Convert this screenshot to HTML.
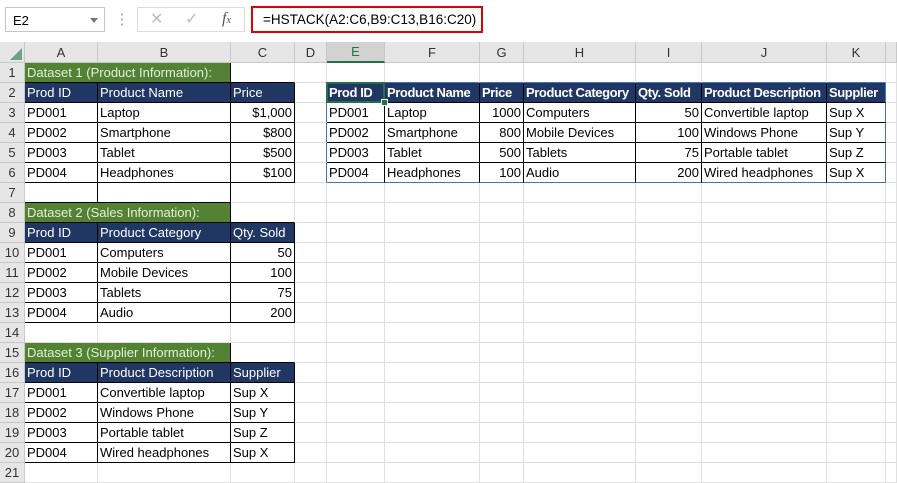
<!DOCTYPE html><html><head><style>
body{margin:0;width:897px;height:481px;overflow:hidden;background:#fff;font-family:"Liberation Sans",sans-serif;position:relative}
.top{position:absolute;left:0;top:0;width:897px;height:42px;background:#fff}
.nb{position:absolute;left:5px;top:7px;width:100px;height:25px;border:1px solid #c6c6c6;font-size:13px;line-height:25px;padding-left:7px;box-sizing:border-box}
.nb:after{content:"";position:absolute;right:6px;top:10px;border:4px solid transparent;border-top:5px solid #777}
.dots{position:absolute;left:121px;top:12px;width:2px;height:14px;background:radial-gradient(circle,#aaa 1px,transparent 1.2px) 0 0/2px 5px}
.fx{position:absolute;left:137px;top:7px;width:108px;height:25px;border:1px solid #dcdcdc;box-sizing:border-box;color:#bbb;font-size:16px}
.fb{position:absolute;left:251px;top:6px;width:232px;height:27px;border:2px solid #e00000;box-sizing:border-box;font-size:13.5px;line-height:23px;padding-left:10px}
table{position:absolute;left:0;top:42px;width:897px;border-collapse:separate;border-spacing:0;table-layout:fixed;font-size:13px}
td{height:20px;box-sizing:border-box;padding:0 2px;border-right:1px solid #e0e0e0;border-bottom:1px solid #e0e0e0;white-space:nowrap;overflow:hidden;line-height:19px}
tr.h td{background:#e6e6e6;text-align:center;border-color:#c8c8c8;color:#333}
td.rh{background:#e6e6e6;text-align:center;border-color:#c8c8c8;padding:0;color:#333}
.r{text-align:right}
.bb{border-bottom-color:#000}.br{border-right-color:#000}
.k{border-right-color:#000;border-bottom-color:#000}
.g{background:#548235;color:#e2efda}
.n{background:#203764;color:#fff}
.nb2{font-weight:bold;letter-spacing:-0.4px}
.ub{border-bottom-color:#4472c4}.ur{border-right-color:#4472c4}
.sel{position:absolute;left:326px;top:82px;width:59px;height:21px;border:2px solid #217346;box-sizing:border-box}
.sel:after{content:"";position:absolute;right:-5px;bottom:-5px;width:5px;height:5px;background:#217346;border:1px solid #fff}
</style></head><body>
<div class="top"><div class="nb">E2</div><div class="dots"></div>
<div class="fx"><span style="position:absolute;left:12px;top:1px">✕</span><span style="position:absolute;left:47px;top:1px">✓</span><span style="position:absolute;left:84px;top:2px;color:#555;font-style:italic;font-family:'Liberation Serif',serif">f<span style="font-size:10px">x</span></span></div>
<div class="fb">=HSTACK(A2:C6,B9:C13,B16:C20)</div></div>
<table>
<colgroup><col style="width:25px"><col style="width:73px"><col style="width:133px"><col style="width:64px"><col style="width:32px"><col style="width:58px"><col style="width:95px"><col style="width:44px"><col style="width:112px"><col style="width:66px"><col style="width:125px"><col style="width:59px"><col style="width:11px"></colgroup>
<tr class="h"><td style="position:relative"><span style="position:absolute;right:2px;bottom:2px;border-left:12px solid transparent;border-bottom:12px solid #217346;opacity:.6"></span></td><td>A</td><td>B</td><td>C</td><td>D</td><td style="background:#d2d2d2;border-bottom:2px solid #217346;color:#217346">E</td><td>F</td><td>G</td><td>H</td><td>I</td><td>J</td><td>K</td><td></td></tr>
<tr><td class="rh">1</td><td class="g k" colspan="2">Dataset 1 (Product Information):</td><td class="bb"></td><td></td><td class="ub"></td><td class="ub"></td><td class="ub"></td><td class="ub"></td><td class="ub"></td><td class="ub"></td><td class="ub"></td><td></td></tr>
<tr><td class="rh br">2</td><td class="n k">Prod ID</td><td class="n k">Product Name</td><td class="n k">Price</td><td class="ur"></td><td class="n k nb2">Prod ID</td><td class="n k nb2">Product Name</td><td class="n k nb2">Price</td><td class="n k nb2">Product Category</td><td class="n k nb2">Qty. Sold</td><td class="n k nb2">Product Description</td><td class="n k nb2 ur">Supplier</td><td></td></tr>
<tr><td class="rh br">3</td><td class="k">PD001</td><td class="k">Laptop</td><td class="k r">$1,000</td><td class="ur"></td><td class="k">PD001</td><td class="k">Laptop</td><td class="k r">1000</td><td class="k">Computers</td><td class="k r">50</td><td class="k">Convertible laptop</td><td class="k ur">Sup X</td><td></td></tr>
<tr><td class="rh br">4</td><td class="k">PD002</td><td class="k">Smartphone</td><td class="k r">$800</td><td class="ur"></td><td class="k">PD002</td><td class="k">Smartphone</td><td class="k r">800</td><td class="k">Mobile Devices</td><td class="k r">100</td><td class="k">Windows Phone</td><td class="k ur">Sup Y</td><td></td></tr>
<tr><td class="rh br">5</td><td class="k">PD003</td><td class="k">Tablet</td><td class="k r">$500</td><td class="ur"></td><td class="k">PD003</td><td class="k">Tablet</td><td class="k r">500</td><td class="k">Tablets</td><td class="k r">75</td><td class="k">Portable tablet</td><td class="k ur">Sup Z</td><td></td></tr>
<tr><td class="rh br">6</td><td class="k">PD004</td><td class="k">Headphones</td><td class="k r">$100</td><td class="ur"></td><td class="k ub">PD004</td><td class="k ub">Headphones</td><td class="k r ub">100</td><td class="k ub">Audio</td><td class="k r ub">200</td><td class="k ub">Wired headphones</td><td class="ub ur">Sup X</td><td></td></tr>
<tr><td class="rh br">7</td><td class="k"></td><td class="k"></td><td></td><td></td><td></td><td></td><td></td><td></td><td></td><td></td><td></td><td></td></tr>
<tr><td class="rh br">8</td><td class="g k" colspan="2">Dataset 2 (Sales Information):</td><td class="bb"></td><td></td><td></td><td></td><td></td><td></td><td></td><td></td><td></td><td></td></tr>
<tr><td class="rh br">9</td><td class="n k">Prod ID</td><td class="n k">Product Category</td><td class="n k">Qty. Sold</td><td></td><td></td><td></td><td></td><td></td><td></td><td></td><td></td><td></td></tr>
<tr><td class="rh br">10</td><td class="k">PD001</td><td class="k">Computers</td><td class="k r">50</td><td></td><td></td><td></td><td></td><td></td><td></td><td></td><td></td><td></td></tr>
<tr><td class="rh br">11</td><td class="k">PD002</td><td class="k">Mobile Devices</td><td class="k r">100</td><td></td><td></td><td></td><td></td><td></td><td></td><td></td><td></td><td></td></tr>
<tr><td class="rh br">12</td><td class="k">PD003</td><td class="k">Tablets</td><td class="k r">75</td><td></td><td></td><td></td><td></td><td></td><td></td><td></td><td></td><td></td></tr>
<tr><td class="rh br">13</td><td class="k">PD004</td><td class="k">Audio</td><td class="k r">200</td><td></td><td></td><td></td><td></td><td></td><td></td><td></td><td></td><td></td></tr>
<tr><td class="rh">14</td><td></td><td></td><td></td><td></td><td></td><td></td><td></td><td></td><td></td><td></td><td></td><td></td></tr>
<tr><td class="rh">15</td><td class="g k" colspan="2">Dataset 3 (Supplier Information):</td><td class="bb"></td><td></td><td></td><td></td><td></td><td></td><td></td><td></td><td></td><td></td></tr>
<tr><td class="rh br">16</td><td class="n k">Prod ID</td><td class="n k">Product Description</td><td class="n k">Supplier</td><td></td><td></td><td></td><td></td><td></td><td></td><td></td><td></td><td></td></tr>
<tr><td class="rh br">17</td><td class="k">PD001</td><td class="k">Convertible laptop</td><td class="k">Sup X</td><td></td><td></td><td></td><td></td><td></td><td></td><td></td><td></td><td></td></tr>
<tr><td class="rh br">18</td><td class="k">PD002</td><td class="k">Windows Phone</td><td class="k">Sup Y</td><td></td><td></td><td></td><td></td><td></td><td></td><td></td><td></td><td></td></tr>
<tr><td class="rh br">19</td><td class="k">PD003</td><td class="k">Portable tablet</td><td class="k">Sup Z</td><td></td><td></td><td></td><td></td><td></td><td></td><td></td><td></td><td></td></tr>
<tr><td class="rh br">20</td><td class="k">PD004</td><td class="k">Wired headphones</td><td class="k">Sup X</td><td></td><td></td><td></td><td></td><td></td><td></td><td></td><td></td><td></td></tr>
<tr><td class="rh">21</td><td></td><td></td><td></td><td></td><td></td><td></td><td></td><td></td><td></td><td></td><td></td><td></td></tr>
</table>
<div class="sel"></div>
</body></html>
